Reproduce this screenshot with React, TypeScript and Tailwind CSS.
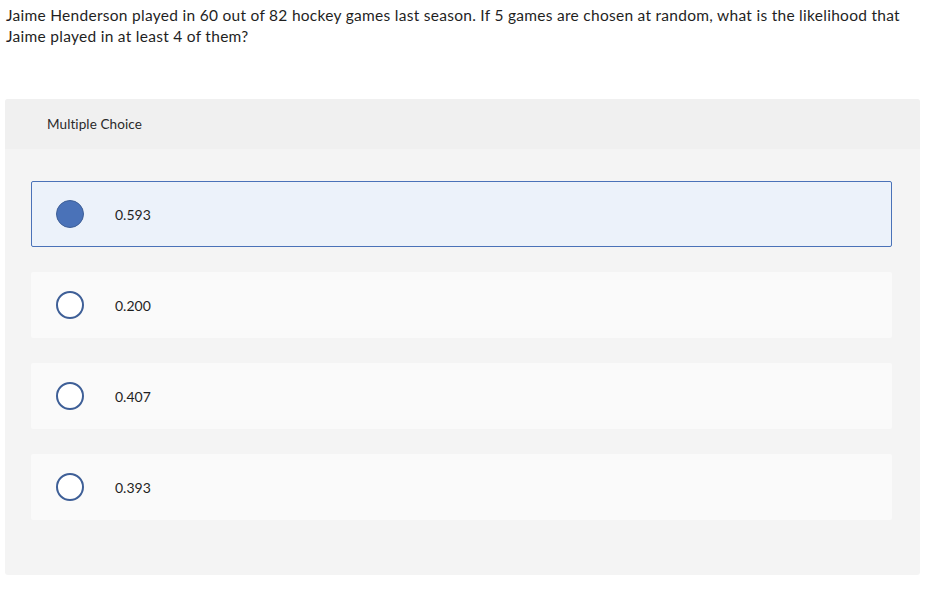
const OPTIONS = ["0.593", "0.200", "0.407", "0.393"];

export default function App() {
  const selected = 0;

  return (
    <div className="min-h-[594px] w-[935px] bg-white font-['Lato',sans-serif] text-[#1f1f1f]">
      {/* Question */}
      <p className="whitespace-nowrap pl-[6px] pt-[5px] text-[15.5px] leading-[21px] tracking-[0.28px]">
        Jaime Henderson played in 60 out of 82 hockey games last season. If 5 games are chosen at random, what is the
        likelihood that
        <br />
        Jaime played in at least 4 of them?
      </p>

      {/* Answer panel */}
      <div className="ml-[5px] mt-[52px] w-[915px] overflow-hidden rounded-[3px] bg-[#f4f4f4]">
        <div className="flex h-[50px] items-center bg-[#f0f0f0] pl-[42px] text-[13.5px] tracking-[0.1px] text-[#2a2a2a]">
          Multiple Choice
        </div>

        <div className="flex flex-col gap-[25px] pb-[55px] pl-[26px] pr-[28px] pt-[32px]">
          {OPTIONS.map((opt, i) => {
            const isSel = i === selected;
            return (
              <div
                key={opt}
                className={
                  isSel
                    ? "flex h-[66px] items-center rounded-[2px] border border-[#4a72b8] bg-[#ecf2fa]"
                    : "flex h-[66px] items-center rounded-[2px] border border-transparent bg-[#fafafa]"
                }
              >
                <span
                  className={
                    isSel
                      ? "ml-[24px] h-[28px] w-[28px] rounded-full border border-[#3e5f97] bg-[#4a72b8]"
                      : "ml-[24px] h-[28px] w-[28px] rounded-full border-2 border-[#3e5f97] bg-white"
                  }
                />
                <span className="ml-[31px] text-[14px] text-[#1f1f1f]">{opt}</span>
              </div>
            );
          })}
        </div>
      </div>
    </div>
  );
}
